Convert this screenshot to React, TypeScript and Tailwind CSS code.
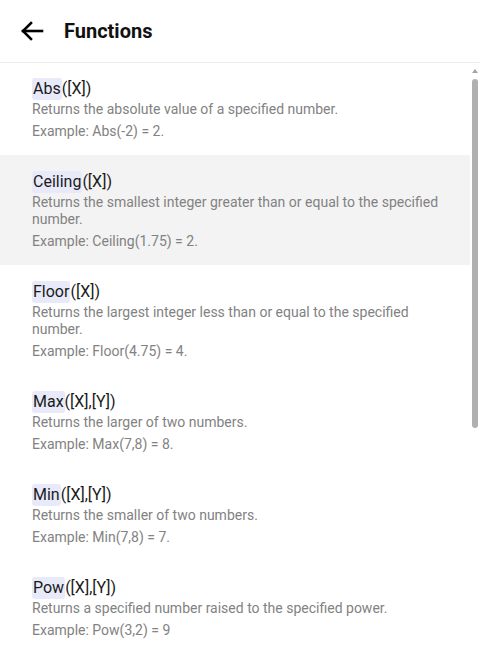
import React, { useState } from 'react';

type Fn = {
  name: string;
  args: string;
  description: string;
  example: string;
};

const functions: Fn[] = [
  { name: 'Abs', args: '([X])', description: 'Returns the absolute value of a specified number.', example: 'Example: Abs(-2) = 2.' },
  { name: 'Ceiling', args: '([X])', description: 'Returns the smallest integer greater than or equal to the specified number.', example: 'Example: Ceiling(1.75) = 2.' },
  { name: 'Floor', args: '([X])', description: 'Returns the largest integer less than or equal to the specified number.', example: 'Example: Floor(4.75) = 4.' },
  { name: 'Max', args: '([X],[Y])', description: 'Returns the larger of two numbers.', example: 'Example: Max(7,8) = 8.' },
  { name: 'Min', args: '([X],[Y])', description: 'Returns the smaller of two numbers.', example: 'Example: Min(7,8) = 7.' },
  { name: 'Pow', args: '([X],[Y])', description: 'Returns a specified number raised to the specified power.', example: 'Example: Pow(3,2) = 9' },
];

const BackArrow = () => (
  <svg width="24" height="20" viewBox="0 0 24 20" fill="none" stroke="#000" strokeWidth="2.6" strokeLinecap="square">
    <path d="M3 10H22" />
    <path d="M11 2L3 10L11 18" strokeLinejoin="miter" />
  </svg>
);

const App: React.FC = () => {
  const [hovered, setHovered] = useState<number>(1);

  return (
    <div className="h-[653px] w-[480px] flex flex-col bg-white font-['Roboto',sans-serif] overflow-hidden">
      {/* Header */}
      <div className="h-[63px] shrink-0 flex items-center border-b border-[#ececec] pl-[20px]">
        <button className="flex items-center">
          <BackArrow />
        </button>
        <h1 className="ml-[20px] text-[20px] font-bold text-[#111]">Functions</h1>
      </div>

      <div className="flex-1 flex min-h-0">
        {/* List */}
        <div className="flex-1 overflow-hidden">
          {functions.map((fn, i) => (
            <div
              key={fn.name}
              onMouseEnter={() => setHovered(i)}
              className={`pl-[32px] pr-[24px] pb-[15px] cursor-pointer ${i === 0 ? 'pt-[14px]' : 'pt-[15px]'} ${hovered === i ? 'bg-[#f3f3f3]' : 'bg-white'}`}
            >
              <div className="flex items-center h-[24px] text-[16px] text-[#1a1a1a]">
                <span className="bg-[#e8eafa] rounded-[3px] px-[1px] leading-[22px]">{fn.name}</span>
                <span>{fn.args}</span>
              </div>
              <p className="text-[14px] leading-[17px] text-[#828282]">{fn.description}</p>
              <p className="mt-[5px] text-[14px] leading-[17px] text-[#828282]">{fn.example}</p>
            </div>
          ))}
        </div>

        {/* Scrollbar */}
        <div className="w-[10px] shrink-0 flex flex-col items-center pt-[6px]">
          <div className="w-0 h-0 border-x-[3px] border-x-transparent border-b-[4px] border-b-[#a3a3a3]" />
          <div className="mt-[6px] w-[6px] h-[349px] rounded-full bg-[#b0b0b0]" />
        </div>
      </div>
    </div>
  );
};

export default App;
